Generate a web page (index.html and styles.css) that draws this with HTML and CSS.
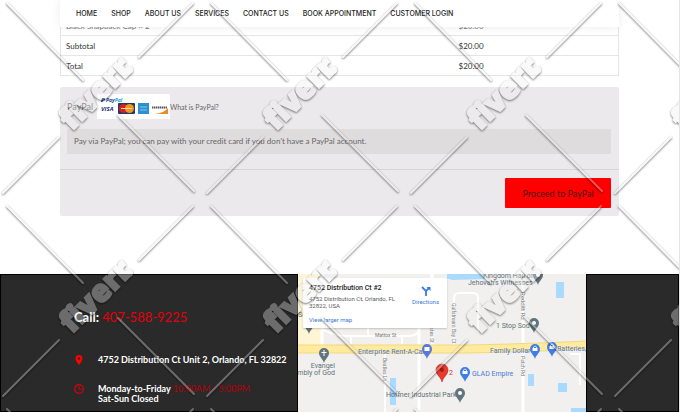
FILE: index.html
```
<!DOCTYPE html>
<html lang="en">
<head>
    <meta charset="UTF-8">
    <meta name="viewport" content="width=device-width, initial-scale=1.0">
    <title>Checkout</title>
    <link rel="stylesheet" href="styles.css">
</head>
<body>
    <div class="page">
        <header class="header">
            <nav class="nav">
                <a href="#">HOME</a>
                <a href="#">SHOP</a>
                <a href="#">ABOUT US</a>
                <a href="#">SERVICES</a>
                <a href="#">CONTACT US</a>
                <a href="#">BOOK APPOINTMENT</a>
                <a href="#">CUSTOMER LOGIN</a>
            </nav>
        </header>

        <main class="checkout">
            <!-- Order review -->
            <table class="order">
                <tbody>
                    <tr class="item"><td>Black Snapback Cap &times; 2</td><td>$20.00</td></tr>
                    <tr><th scope="row">Subtotal</th><td>$20.00</td></tr>
                    <tr><th scope="row">Total</th><td>$20.00</td></tr>
                </tbody>
            </table>

            <!-- Payment -->
            <form class="payment">
                <div class="method">
                    <span class="method-name">PayPal</span>
                    <svg class="cards" viewBox="0 0 73 25" aria-hidden="true">
                        <rect width="73" height="25" fill="#fff"/>
                        <path d="M5 4h2.500q1.500 1 0 2.500H6L5.500 8H4z" fill="#14408f"/>
                        <text x="9" y="8" class="card-paypal" fill="#14408f">Pay<tspan fill="#1f9ad6">Pal</tspan></text>
                        <text x="4" y="17" class="card-visa" fill="#1c2f78">VISA</text>
                        <rect x="21" y="9" width="17" height="11" rx="1" fill="#1d3a6b"/>
                        <circle cx="26.500" cy="14.500" r="4.500" fill="#d7201f"/>
                        <circle cx="32.500" cy="14.500" r="4.500" fill="#f2961c"/>
                        <path d="M24 14.500h11" stroke="#f7d9c0" stroke-width="1"/>
                        <rect x="41" y="9" width="11" height="11" fill="#2b8fd0"/>
                        <path d="M43 13h7M43 16h7" stroke="#8cc6ec" stroke-width="1"/>
                        <path d="M71 14v6H58q9-1 13-6z" fill="#f08a24"/>
                        <path d="M55 13.500h15" stroke="#555" stroke-width="2" stroke-dasharray="1.500 .5"/>
                    </svg>
                    <a href="#" class="about">What is PayPal?</a>
                </div>
                <p class="method-note">Pay via PayPal; you can pay with your credit card if you don’t have a PayPal account.</p>
                <div class="place-order">
                    <button type="button">Proceed to PayPal</button>
                </div>
            </form>
        </main>

        <footer class="footer">
            <section class="contact">
                <h2>Call: <a href="tel:4075889225">407-588-9225</a></h2>
                <div class="contact-row">
                    <svg viewBox="0 0 10 10" aria-hidden="true"><path d="M5 0a3.500 3.500 0 0 0-3.500 3.500C1.500 6 5 10 5 10s3.500-4 3.500-6.500A3.500 3.500 0 0 0 5 0zm0 2.200a1.300 1.300 0 1 1 0 2.600 1.300 1.300 0 0 1 0-2.600z" fill="#f00" fill-rule="evenodd"/></svg>
                    <p>4752 Distribution Ct Unit 2, Orlando, FL 32822</p>
                </div>
                <div class="contact-row">
                    <svg viewBox="0 0 10 10" aria-hidden="true"><circle cx="5" cy="5" r="4.300" fill="none" stroke="#d8000c" stroke-width="1.200"/><path d="M5 2v3.200h2.500" fill="none" stroke="#d8000c"/></svg>
                    <p>Monday-to-Friday <span class="hours">10:00AM - 5:00PM</span><br>Sat-Sun Closed</p>
                </div>
            </section>

            <section class="map">
                <svg class="map-canvas" viewBox="0 0 288 139">
                    <defs>
                        <path id="pin" d="M0 10C-1 6-5 4-5 0a5 5 0 0 1 10 0C5 4 1 6 0 10z"/>
                    </defs>
                    <rect width="288" height="139" fill="#f1f0ee"/>
                    <rect width="24" height="71" fill="#fdf5d3"/>
                    <g fill="#a9daff">
                        <rect x="92" y="104" width="6" height="27"/>
                        <path d="M149 0h38v5l-34 1z"/>
                        <rect x="149" y="0" width="6" height="5"/>
                        <rect x="258" y="8" width="8" height="16"/>
                        <rect x="230" y="100" width="6" height="12"/>
                        <rect x="260" y="109" width="9" height="9"/>
                        <rect x="273" y="134" width="15" height="5"/>
                    </g>
                    <g fill="none" stroke="#fff" stroke-width="3">
                        <path d="M24 0v71M121 50v89M134 0v71M225 0v139"/>
                        <path d="M24 55q12 7 26 7h60q11 0 11-8" stroke-width="2"/>
                        <path d="M53 62v9M70 50v12M104 62v9M87 79v60" stroke-width="2"/>
                        <path d="M156 71V24q0-5 5-5h14q5 0 5 5v34M272 80h10v31" stroke-width="2"/>
                    </g>
                    <path d="M0 75h170q60-1 118-4" fill="none" stroke="#f5d87c" stroke-width="9"/>
                    <path d="M0 75h170q60-1 118-4" fill="none" stroke="#ffea9e" stroke-width="7"/>
                    <g class="street">
                        <text x="77" y="63">Mattox St</text>
                        <text transform="translate(85 84) rotate(90)">Beatles Ln</text>
                        <text transform="translate(132 50) rotate(90)">Bates St</text>
                        <text transform="translate(154 29) rotate(90)">Gulfstream Bay Ct</text>
                        <text transform="translate(223 18) rotate(90)" class="road">Redditt Rd</text>
                        <text transform="translate(223 82) rotate(90)">Patch Rd</text>
                    </g>
                    <g class="place">
                        <text x="185" y="4">Kingdom Hall of</text>
                        <text x="170" y="11">Jehovah's Witnesses</text>
                        <text x="198" y="54">1 Stop Sod</text>
                        <text x="37" y="94" text-anchor="end">Evangel</text>
                        <text x="37" y="101" text-anchor="end">Assembly of God</text>
                        <text x="88" y="123">Hoffner Industrial Park</text>
                        <text x="0" y="43">Sch</text>
                    </g>
                    <g class="place shop">
                        <text x="60" y="80">Enterprise Rent-A-Car</text>
                        <text x="192" y="79">Family Dollar</text>
                        <text x="259" y="77">Batteries,</text>
                        <text x="174" y="102">GLAD Empire</text>
                    </g>
                    <text x="151" y="101" class="target">2</text>
                    <g fill="#60757f">
                        <use href="#pin" x="11" y="50"/>
                        <use href="#pin" x="26" y="79"/>
                        <use href="#pin" x="240" y="1"/>
                        <use href="#pin" x="236" y="49"/>
                        <use href="#pin" x="162" y="119"/>
                    </g>
                    <g fill="#3f7de8">
                        <use href="#pin" x="129" y="75" fill="#5778d8"/>
                        <use href="#pin" x="237" y="75"/>
                        <use href="#pin" x="254" y="73"/>
                        <use href="#pin" x="167" y="98"/>
                    </g>
                    <g fill="#fff">
                        <path d="M25.500 76h1v2h2v1h-2v3h-1v-3h-2v-1h2z"/>
                        <circle cx="236" cy="49" r="2"/>
                        <circle cx="162" cy="119" r="2"/>
                        <circle cx="240" cy="1" r="2"/>
                        <path d="M126.500 73h5v4h-5zM234.500 74h5v3h-5zM251.500 72h5v3h-5zM164.500 97h5v3h-5z"/>
                    </g>
                    <path d="M235.500 74v-1q1.500-2 3 0v1M252.500 72v-1q1.500-2 3 0v1M165.500 97v-1q1.500-2 3 0v1" fill="none" stroke="#fff" stroke-width=".8"/>
                    <path d="M144 108c-1-5-6-7-6-12a6 6 0 0 1 12 0c0 5-5 7-6 12z" fill="#ea3a30" stroke="#b9251e" stroke-width=".6"/>
                    <circle cx="144" cy="96" r="2" fill="#a51c16"/>
                </svg>
                <div class="map-card">
                    <div class="map-address">
                        <h3>4752 Distribution Ct #2</h3>
                        <p>4752 Distribution Ct, Orlando, FL 32822, USA</p>
                        <a href="#">View larger map</a>
                    </div>
                    <a href="#" class="directions">
                        <svg viewBox="0 0 10 10" aria-hidden="true"><path d="M1 1l4 4v5M5 6V5l3-3" fill="none" stroke="#3a7de0" stroke-width="1.800"/><path d="M5.500 1H9.500v4z" fill="#3a7de0"/></svg>
                        Directions
                    </a>
                </div>
            </section>

            <div class="footer-end"></div>
        </footer>

        <!-- Repeating brand overlay -->
        <svg class="overlay" aria-hidden="true">
            <defs>
                <filter id="emboss" x="0" y="0" width="204" height="203" filterUnits="userSpaceOnUse" color-interpolation-filters="sRGB">
                    <feGaussianBlur in="SourceAlpha" stdDeviation="0.8"/>
                    <feOffset dy="1" result="blur"/>
                    <feComposite in="blur" in2="SourceAlpha" operator="out" result="edge"/>
                    <feComponentTransfer in="edge" result="shade"><feFuncA type="linear" slope="0.55"/></feComponentTransfer>
                    <feComponentTransfer in="SourceGraphic" result="face"><feFuncA type="linear" slope="0.34"/></feComponentTransfer>
                    <feMerge><feMergeNode in="shade"/><feMergeNode in="face"/></feMerge>
                </filter>
                <pattern id="tile" width="204" height="203" patternUnits="userSpaceOnUse">
                    <g filter="url(#emboss)">
                        <path d="M7 3l76 77M193 3l-54 54M118 115l76 76M59 137L3 193" stroke="#eee" stroke-width="2" stroke-linecap="round"/>
                        <text transform="translate(72 131) rotate(-45)" class="brand">fiverr</text>
                        <circle cx="129" cy="70" r="4" fill="#eee"/>
                    </g>
                </pattern>
            </defs>
            <rect width="100%" height="100%" fill="url(#tile)"/>
        </svg>
    </div>
</body>
</html>
```
FILE: styles.css
```
* {
    box-sizing: border-box;
}

body {
    margin: 0;
    font-family: Lato, "Noto Sans", sans-serif;
    font-size: 8px;
    color: #333;
    background-color: #fff;
}

h2, h3, p {
    margin: 0;
}

a {
    color: inherit;
    text-decoration: none;
}

.page {
    position: relative;
    display: flex;
    flex-direction: column;
    height: 100vh;
    overflow: hidden;
    border-right: 1px solid #e4e4e4;
}

.header {
    position: relative;
    z-index: 1;
    margin: 0 60px;
    padding: 0 16px;
    background-color: #fff;
    box-shadow: 0 0 10px rgba(0,0,0,0.08);
}

.nav {
    display: flex;
    gap: 14px;
    font-family: Inter, sans-serif;
    font-size: 7px;
    font-weight: 500;
    line-height: 27px;
    color: #222;
    white-space: nowrap;
}

.checkout {
    margin: -12px 60px 0;
}

.order {
    width: 100%;
    border: 1px solid #e5e5e5;
    border-collapse: collapse;
    line-height: 12px;
}

.order th,
.order td {
    padding: 4px 5px 3px;
    border-top: 1px solid #e5e5e5;
    font-weight: normal;
    text-align: left;
}

.order td:last-child {
    width: 165px;
}

.order .item {
    color: #777;
}

.payment {
    margin-top: 11px;
    background-color: #ebe9eb;
    border-radius: 2px;
    color: #666;
}

.method {
    display: flex;
    align-items: center;
    padding: 7px 7px 10px;
}

.method-name {
    width: 30px;
    font-size: 9px;
}

.cards {
    width: 73px;
    height: 25px;
}

.card-paypal {
    font: italic bold 5px "Open Sans", sans-serif;
}

.card-visa {
    font: italic bold 6px "Open Sans", sans-serif;
}

.about {
    font-size: 7px;
}

.method-note {
    margin: 0 8px 0 7px;
    padding: 6px 7px;
    line-height: 13px;
    background-color: #dfdcde;
}

.place-order {
    display: flex;
    justify-content: flex-end;
    margin-top: 15px;
    padding: 8px;
    border-top: 1px solid #d8d5d8;
}

button {
    width: 106px;
    height: 30px;
    padding: 0;
    background-color: #f00;
    color: #4a1515;
    border: none;
    border-radius: 1px;
    font-family: inherit;
    font-size: 9px;
    cursor: pointer;
}

.footer {
    display: grid;
    grid-template-columns: 298fr 288fr 93fr;
    flex: 1;
    min-height: 0;
    margin-top: 58px;
    background-color: #2a2a2a;
    color: #fff;
}

.contact,
.footer-end {
    border: 1px solid #000;
}

.contact {
    padding: 32px 0 0 73px;
}

.contact h2 {
    margin-bottom: 28px;
    font-size: 13px;
    line-height: 20px;
}

.contact h2 a {
    color: #e3000b;
    font-weight: normal;
}

.contact-row {
    display: flex;
    gap: 14px;
    margin-bottom: 19px;
    font-size: 9px;
    font-weight: bold;
    line-height: 10px;
    white-space: nowrap;
}

.contact-row:last-child {
    margin-bottom: 0;
}

.contact-row svg {
    width: 10px;
    height: 10px;
}

.hours {
    color: #b3000b;
    font-weight: normal;
}

.map {
    position: relative;
    overflow: hidden;
    background-color: #f1f0ee;
    font-family: Roboto, sans-serif;
}

.map-canvas {
    display: block;
    width: 100%;
}

.street {
    font-size: 5px;
    fill: #777;
}

.street .road {
    font-size: 6px;
}

.place {
    font-size: 7px;
    fill: #5f7078;
}

.shop {
    fill: #4a78d6;
}

.target {
    font-size: 7px;
    fill: #d93025;
}

.map-card {
    position: absolute;
    top: 4px;
    left: 5px;
    display: flex;
    justify-content: space-between;
    width: 50%;
    padding: 6px 8px 5px 6px;
    background-color: #fff;
    border-radius: 1px;
    box-shadow: 0 1px 2px rgba(0,0,0,0.2);
    color: #5b5b5b;
    font-size: 6px;
    line-height: 7px;
}

.map-address {
    width: 90px;
}

.map-card h3 {
    margin-bottom: 3px;
    color: #222;
    font-size: 7px;
    font-weight: 500;
    line-height: 8px;
}

.map-card a {
    color: #3a78d8;
}

.map-address a {
    display: block;
    margin-top: 7px;
}

.directions {
    padding-top: 2px;
    text-align: center;
}

.directions svg {
    display: block;
    width: 10px;
    height: 10px;
    margin: 0 auto 2px;
}

.overlay {
    position: absolute;
    z-index: 2;
    top: 0;
    left: 0;
    width: 100%;
    height: 100%;
    pointer-events: none;
}

.brand {
    font-family: "Open Sans", sans-serif;
    font-size: 30px;
    font-weight: 800;
    fill: #eee;
    stroke: #eee;
    stroke-width: 2px;
}
```
